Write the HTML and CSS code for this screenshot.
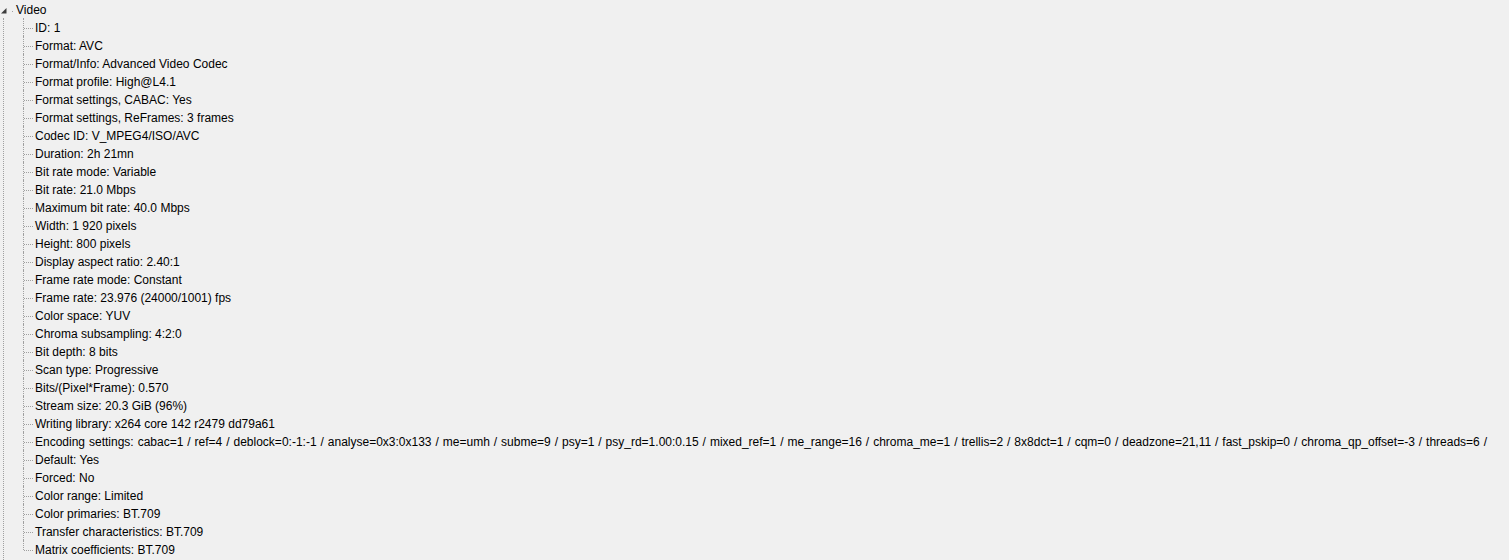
FILE: index.html
```html
<!DOCTYPE html>
<html>
<head>
<meta charset="utf-8">
<link rel="stylesheet" href="styles.css">
</head>
<body>
<div class="tree">
  <div class="root-row">
    <svg class="toggle" width="16" height="18" viewBox="0 0 16 18"><polygon points="6.5,8 6.5,13.5 1,13.5" fill="#3c3c3c"/><rect x="12" y="11" width="1" height="1" fill="#a0a0a0"/></svg>
    <span class="label">Video</span>
  </div>
  <div class="branch">
    <ul class="children">
      <li>ID: 1</li>
      <li>Format: AVC</li>
      <li>Format/Info: Advanced Video Codec</li>
      <li>Format profile: High@L4.1</li>
      <li>Format settings, CABAC: Yes</li>
      <li>Format settings, ReFrames: 3 frames</li>
      <li>Codec ID: V_MPEG4/ISO/AVC</li>
      <li>Duration: 2h 21mn</li>
      <li>Bit rate mode: Variable</li>
      <li>Bit rate: 21.0 Mbps</li>
      <li>Maximum bit rate: 40.0 Mbps</li>
      <li>Width: 1 920 pixels</li>
      <li>Height: 800 pixels</li>
      <li>Display aspect ratio: 2.40:1</li>
      <li>Frame rate mode: Constant</li>
      <li>Frame rate: 23.976 (24000/1001) fps</li>
      <li>Color space: YUV</li>
      <li>Chroma subsampling: 4:2:0</li>
      <li>Bit depth: 8 bits</li>
      <li>Scan type: Progressive</li>
      <li>Bits/(Pixel*Frame): 0.570</li>
      <li>Stream size: 20.3 GiB (96%)</li>
      <li>Writing library: x264 core 142 r2479 dd79a61</li>
      <li class="long">Encoding settings: cabac=1 / ref=4 / deblock=0:-1:-1 / analyse=0x3:0x133 / me=umh / subme=9 / psy=1 / psy_rd=1.00:0.15 / mixed_ref=1 / me_range=16 / chroma_me=1 / trellis=2 / 8x8dct=1 / cqm=0 / deadzone=21,11 / fast_pskip=0 / chroma_qp_offset=-3 / threads=6 /</li>
      <li>Default: Yes</li>
      <li>Forced: No</li>
      <li>Color range: Limited</li>
      <li>Color primaries: BT.709</li>
      <li>Transfer characteristics: BT.709</li>
      <li>Matrix coefficients: BT.709</li>
    </ul>
  </div>
</div>
</body>
</html>
```

FILE: styles.css
```css
html, body {
  margin: 0;
  padding: 0;
  background: #f0f0f0;
  height: 100%;
  overflow: hidden;
}

.tree {
  font-family: "Liberation Sans", Arial, sans-serif;
  font-size: 12px;
  line-height: 15px;
  color: #000;
  min-height: 100%;
  display: flex;
  flex-direction: column;
}

.root-row {
  display: flex;
  align-items: flex-start;
  height: 18px;
}

.toggle {
  display: block;
  flex: none;
}

.label {
  white-space: nowrap;
  padding-top: 3px;
}

.branch {
  flex: 1;
  margin-left: 3px;
  border-left: 1px dotted #a0a0a0;
  padding-left: 19px;
}

.children {
  list-style: none;
  margin: 0;
  padding: 0;
}

.children li {
  position: relative;
  box-sizing: border-box;
  height: 18px;
  padding-top: 3px;
  padding-left: 12px;
  white-space: nowrap;
}

.children li.long {
  word-spacing: 0.62px;
}

.children li::before {
  content: "";
  position: absolute;
  left: 0;
  top: 0;
  bottom: 0;
  border-left: 1px dotted #a0a0a0;
}

.children li:last-child::before {
  bottom: 8px;
}

.children li::after {
  content: "";
  position: absolute;
  left: 1px;
  top: 10px;
  width: 9px;
  border-top: 1px dotted #a0a0a0;
}
```
